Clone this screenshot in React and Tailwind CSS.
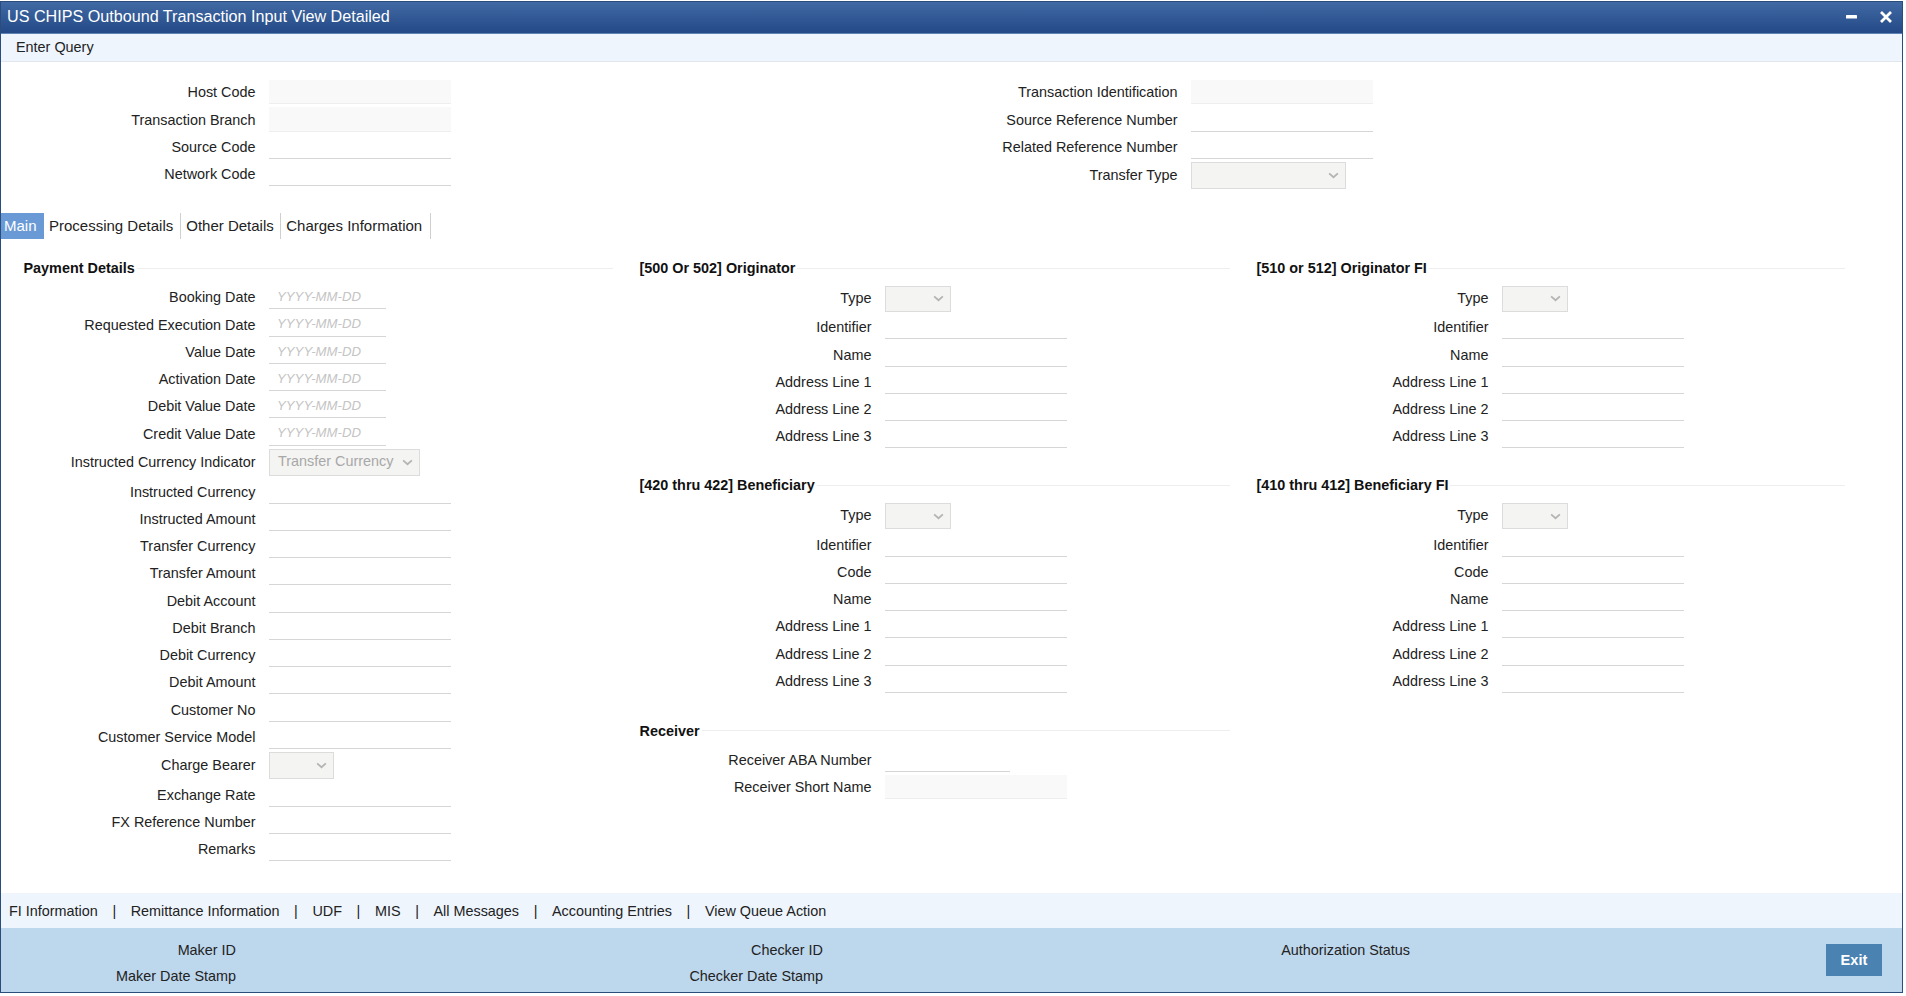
function Chevron() {
  return (
    <svg viewBox="0 0 12 8" className="h-[7px] w-[11px] shrink-0" fill="none" stroke="#b4b4b4" strokeWidth="2">
      <path d="M1 1.5 L6 6 L11 1.5" />
    </svg>
  )
}

function Field({ label, type = "text", width = "w-[182px]", value, tight }) {
  const isSelect = type === "select"
  const rowHeight = tight ? "h-[30px]" : isSelect ? "h-[30.8px]" : "h-[27.25px]"
  return (
    <div className={`flex ${rowHeight}`}>
      <label className={`flex w-[254.5px] shrink-0 items-center justify-end whitespace-nowrap text-[14.4px] text-[#222] ${isSelect ? "pt-[3px]" : "pt-[5px]"}`}>
        {label}
      </label>
      <div className="ml-[13.5px]">
        {type === "text" && <input className={`h-[27.25px] border-b border-[#d6d6d6] bg-white outline-none ${width}`} readOnly />}
        {type === "readonly" && <div className={`mt-[3px] h-[24.25px] border-b border-[#eeeeee] bg-[#f9f9f9] ${width}`} />}
        {type === "date" && (
          <div className="h-[27.25px] w-[117px] border-b border-[#d6d6d6] pl-[8px] pt-[7px] text-[13.2px] italic leading-[16px] text-[#c4c4c4]">
            YYYY-MM-DD
          </div>
        )}
        {isSelect && (
          <div className={`mt-[3.5px] flex h-[26.5px] items-center justify-between border border-[#dcdcdc] bg-[#f4f4f2] pl-[8px] pr-[6px] text-[14.4px] text-[#a8a8a8] ${width}`}>
            <span>{value}</span>
            <Chevron />
          </div>
        )}
      </div>
    </div>
  )
}

function Section({ title, fields, className = "" }) {
  return (
    <section className={className}>
      <div className="mb-[2px] flex h-[22px] items-center gap-[2px] pl-[22.5px] pr-[4px]">
        <h3 className="whitespace-nowrap text-[14.4px] font-bold text-[#111]">{title}</h3>
        <div className="h-px flex-1 -translate-y-px bg-[#eeeeee]" />
      </div>
      {fields.map((f) => (
        <Field key={f.label} {...f} />
      ))}
    </section>
  )
}

const t = (label) => ({ label })
const d = (label) => ({ label, type: "date" })

const payment = [
  d("Booking Date"),
  d("Requested Execution Date"),
  d("Value Date"),
  d("Activation Date"),
  d("Debit Value Date"),
  d("Credit Value Date"),
  { label: "Instructed Currency Indicator", type: "select", width: "w-[151px]", value: "Transfer Currency" },
  t("Instructed Currency"),
  t("Instructed Amount"),
  t("Transfer Currency"),
  t("Transfer Amount"),
  t("Debit Account"),
  t("Debit Branch"),
  t("Debit Currency"),
  t("Debit Amount"),
  t("Customer No"),
  t("Customer Service Model"),
  { label: "Charge Bearer", type: "select", width: "w-[65px]" },
  t("Exchange Rate"),
  t("FX Reference Number"),
  t("Remarks"),
]

const typeField = { label: "Type", type: "select", width: "w-[66px]", tight: true }
const party = [typeField, t("Identifier"), t("Name"), t("Address Line 1"), t("Address Line 2"), t("Address Line 3")]
const partyCode = [typeField, t("Identifier"), t("Code"), t("Name"), t("Address Line 1"), t("Address Line 2"), t("Address Line 3")]

const receiver = [
  { label: "Receiver ABA Number", width: "w-[125px]" },
  { label: "Receiver Short Name", type: "readonly" },
]

const links = ["FI Information", "Remittance Information", "UDF", "MIS", "All Messages", "Accounting Entries", "View Queue Action"]

export default function App() {
  return (
    <div className="h-[996px] w-[1906px] bg-white pt-px font-['Liberation_Sans',Arial,sans-serif]">
      <div className="flex h-[992px] w-[1903px] flex-col border border-[#2a4d7e]">
        <header className="flex h-[32px] shrink-0 items-center justify-between border-b border-[#5f84b3] bg-gradient-to-b from-[#4169a4] to-[#234a86] pb-[2px] pl-[6px] pr-[10px] text-white">
          <h1 className="text-[16.15px]">US CHIPS Outbound Transaction Input View Detailed</h1>
          <div className="flex items-center gap-[23px]">
            <svg viewBox="0 0 11 4" className="h-[4px] w-[11px]" fill="#fff">
              <rect width="11" height="3.6" rx="0.6" />
            </svg>
            <svg viewBox="0 0 12 12" className="h-[12px] w-[12px]" fill="none" stroke="#fff" strokeWidth="2.8">
              <path d="M1 1 L11 11 M11 1 L1 11" />
            </svg>
          </div>
        </header>

        <div className="flex h-[28px] shrink-0 items-center border-b border-[#e2e7ed] bg-[#eef5fd] pl-[15px] text-[14.4px] text-[#222]">
          Enter Query
        </div>

        <main className="min-h-0 flex-1">
          <div className="grid h-[151px] grid-cols-[922px_1fr] pt-[15px]">
            <div>
              <Field label="Host Code" type="readonly" />
              <Field label="Transaction Branch" type="readonly" />
              <Field label="Source Code" />
              <Field label="Network Code" />
            </div>
            <div>
              <Field label="Transaction Identification" type="readonly" />
              <Field label="Source Reference Number" />
              <Field label="Related Reference Number" />
              <Field label="Transfer Type" type="select" width="w-[155px]" />
            </div>
          </div>

          <nav className="flex h-[26px] text-[15px] leading-[26px] text-[#222]">
            <span className="w-[43px] bg-[#6a9ad6] pl-[3px] text-white">Main</span>
            <span className="border-r border-[#cfcfcf] pl-[5px] pr-[7px]">Processing Details</span>
            <span className="border-r border-[#cfcfcf] pl-[5px] pr-[6.5px]">Other Details</span>
            <span className="border-r border-[#cfcfcf] pl-[5px] pr-[7.5px]">Charges Information</span>
          </nav>

          <div className="grid grid-cols-[616px_617px_1fr] pt-[19px]">
            <Section title="Payment Details" fields={payment} />
            <div>
              <Section title="[500 Or 502] Originator" fields={party} className="mb-[27px]" />
              <Section title="[420 thru 422] Beneficiary" fields={partyCode} className="mb-[28px]" />
              <Section title="Receiver" fields={receiver} />
            </div>
            <div className="pr-[53px]">
              <Section title="[510 or 512] Originator FI" fields={party} className="mb-[27px]" />
              <Section title="[410 thru 412] Beneficiary FI" fields={partyCode} />
            </div>
          </div>
        </main>

        <div className="flex h-[35px] shrink-0 items-center gap-[14.6px] bg-[#eef5fd] pl-[8px] pt-[2px] text-[14.4px] text-[#222]">
          {links.map((link, i) => (
            <div key={link} className="flex items-center gap-[14.6px]">
              {i > 0 && <span>|</span>}
              <a>{link}</a>
            </div>
          ))}
        </div>

        <footer className="flex h-[64px] shrink-0 bg-[#bdd7ed] text-[14.4px] text-[#222]">
          <div className="w-[235px] pt-[9px] text-right leading-[26px]">
            <div>Maker ID</div>
            <div>Maker Date Stamp</div>
          </div>
          <div className="w-[587px] pt-[9px] text-right leading-[26px]">
            <div>Checker ID</div>
            <div>Checker Date Stamp</div>
          </div>
          <div className="w-[587px] pt-[9px] text-right leading-[26px]">
            <div>Authorization Status</div>
          </div>
          <div className="ml-auto flex items-center pr-[20px]">
            <button className="h-[32px] w-[56px] bg-[#4a82b2] pt-[1px] text-[14.6px] font-bold text-white">Exit</button>
          </div>
        </footer>
      </div>
    </div>
  )
}
